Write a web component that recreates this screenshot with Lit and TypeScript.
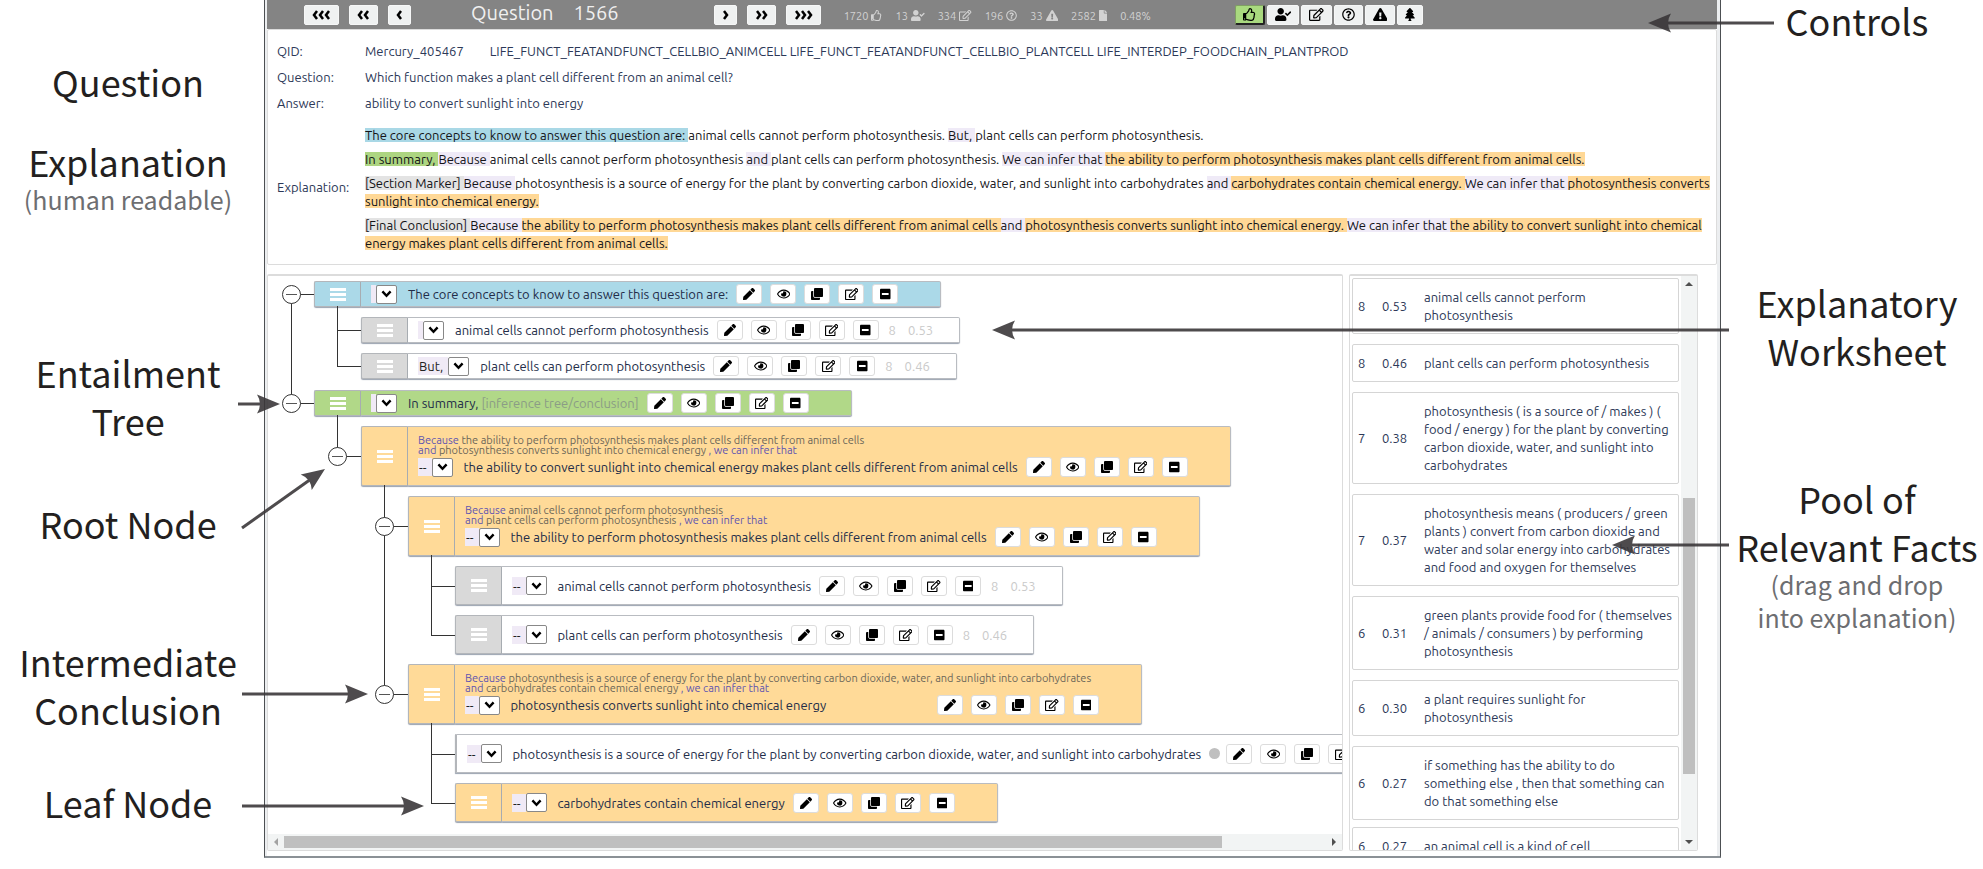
import { LitElement, html, css, svg, nothing, TemplateResult } from "lit";
import { customElement, property } from "lit/decorators.js";
import { classMap } from "lit/directives/class-map.js";

const ICONS: Record<string, [number, string]> = {
  pen: [512, "M290.74 93.24l128.02 128.02-277.99 277.99-114.14 12.6C11.35 513.54-1.56 500.62.14 485.34l12.7-114.22 277.9-277.88zm207.2-19.06l-60.11-60.11c-18.75-18.75-49.16-18.75-67.91 0l-56.55 56.55 128.02 128.02 56.55-56.55c18.75-18.76 18.75-49.16 0-67.91z"],
  eye: [576, "M288 144a110.94 110.94 0 0 0-31.24 5 55.4 55.4 0 0 1 7.24 27 56 56 0 0 1-56 56 55.4 55.4 0 0 1-27-7.24A111.71 111.71 0 1 0 288 144zm284.52 97.4C518.29 135.59 410.93 64 288 64S57.68 135.64 3.48 241.41a32.35 32.35 0 0 0 0 29.19C57.71 376.41 165.07 448 288 448s230.32-71.64 284.52-177.41a32.35 32.35 0 0 0 0-29.19zM288 400c-98.65 0-189.09-55-237.93-144C98.91 167 189.34 112 288 112s189.09 55 237.93 144C477.1 345 386.66 400 288 400z"],
  clone: [512, "M464 0c26.51 0 48 21.49 48 48v288c0 26.51-21.49 48-48 48H176c-26.51 0-48-21.49-48-48V48c0-26.51 21.49-48 48-48h288M176 416c-44.112 0-80-35.888-80-80V128H48c-26.51 0-48 21.49-48 48v288c0 26.51 21.49 48 48 48h288c26.51 0 48-21.49 48-48v-48H176z"],
  edit: [576, "M402.3 344.9l32-32c5-5 13.7-1.5 13.7 5.7V464c0 26.5-21.5 48-48 48H48c-26.5 0-48-21.5-48-48V112c0-26.5 21.5-48 48-48h273.5c7.1 0 10.7 8.6 5.7 13.7l-32 32c-1.5 1.5-3.5 2.3-5.7 2.3H48v352h352V350.5c0-2.1.8-4.1 2.3-5.6zm156.6-201.8L296.3 405.7l-90.4 10c-26.2 2.9-48.5-19.2-45.6-45.6l10-90.4L432.9 17.1c22.9-22.9 59.9-22.9 82.7 0l43.2 43.2c22.9 22.9 22.9 60 .1 82.8zM460.1 174L402 115.9 216.2 301.8l-7.3 65.3 65.3-7.3L460.1 174zm64.8-79.7l-43.2-43.2c-4.1-4.1-10.8-4.1-14.8 0L436 82l58.1 58.1 30.9-30.9c4-4.2 4-10.8-.1-14.9z"],
  minus: [448, "M400 32H48C21.5 32 0 53.5 0 80v352c0 26.5 21.5 48 48 48h352c26.5 0 48-21.5 48-48V80c0-26.5-21.5-48-48-48zM92 296c-6.6 0-12-5.4-12-12v-56c0-6.6 5.4-12 12-12h264c6.6 0 12 5.4 12 12v56c0 6.6-5.4 12-12 12H92z"],
  thumb: [512, "M466.27 286.69C475.04 271.84 480 256 480 236.85c0-44.015-37.218-85.58-85.82-85.58H357.7c4.92-12.81 8.85-28.13 8.85-46.54C366.55 31.936 328.86 0 271.28 0c-61.607 0-58.093 94.933-71.76 108.6-22.747 22.747-49.615 66.447-68.76 83.4H32c-17.673 0-32 14.327-32 32v240c0 17.673 14.327 32 32 32h64c14.893 0 27.408-10.174 30.978-23.95 44.509 1.001 75.06 39.94 177.802 39.94 7.22 0 15.22.01 22.22.01 77.117 0 111.986-39.423 112.94-95.33 13.319-18.425 20.299-43.122 17.34-66.99 9.854-18.452 13.664-40.343 8.99-62.99zm-61.75 53.83c12.56 21.13 1.26 49.41-13.94 57.57 7.7 48.78-17.608 65.9-53.12 65.9h-37.82c-71.639 0-118.029-37.82-171.64-37.82V240h10.92c28.36 0 67.98-70.89 94.54-97.46 28.36-28.36 18.91-75.63 37.82-94.54 47.27 0 47.27 32.98 47.27 56.73 0 39.17-28.36 56.72-28.36 94.54h103.99c21.11 0 37.73 18.91 37.82 37.82.09 18.9-12.82 37.81-22.27 37.81 13.489 14.555 16.371 45.236-5.21 65.62zM88 432c0 13.255-10.745 24-24 24s-24-10.745-24-24 10.745-24 24-24 24 10.745 24 24z"],
  user: [640, "M224 256c70.7 0 128-57.3 128-128S294.7 0 224 0 96 57.3 96 128s57.3 128 128 128zm89.6 32h-16.7c-22.2 10.2-46.9 16-72.9 16s-50.6-5.8-72.9-16h-16.7C60.2 288 0 348.2 0 422.4V464c0 26.5 21.5 48 48 48h352c26.5 0 48-21.5 48-48v-41.6c0-74.2-60.2-134.4-134.4-134.4zm323-128.4l-27.8-28.1c-4.6-4.7-12.1-4.7-16.8-.1l-104.8 104-45.5-45.8c-4.6-4.7-12.1-4.7-16.8-.1l-28.1 27.9c-4.7 4.6-4.7 12.1-.1 16.8l81.7 82.3c4.6 4.7 12.1 4.7 16.8.1l141.3-140.2c4.6-4.7 4.7-12.2.1-16.8z"],
  question: [512, "M256 8C119.043 8 8 119.083 8 256c0 136.997 111.043 248 248 248s248-111.003 248-248C504 119.083 392.957 8 256 8zm0 448c-110.532 0-200-89.431-200-200 0-110.495 89.472-200 200-200 110.491 0 200 89.471 200 200 0 110.53-89.431 200-200 200zm107.244-255.2c0 67.052-72.421 68.084-72.421 92.863V300c0 6.627-5.373 12-12 12h-45.647c-6.627 0-12-5.373-12-12v-8.659c0-35.745 27.1-50.034 47.579-61.516 17.561-9.845 28.324-16.541 28.324-29.579 0-17.246-21.999-28.693-39.784-28.693-23.189 0-33.894 10.977-48.942 29.969-4.057 5.12-11.46 6.071-16.666 2.124l-27.824-21.098c-5.107-3.872-6.251-11.066-2.644-16.363C184.846 131.491 214.94 112 261.794 112c49.071 0 101.45 38.304 101.45 88.8zM298 368c0 23.159-18.841 42-42 42s-42-18.841-42-42 18.841-42 42-42 42 18.841 42 42z"],
  warning: [576, "M569.517 440.013C587.975 472.007 564.806 512 527.94 512H48.054c-36.937 0-59.999-40.055-41.577-71.987L246.423 23.985c18.467-32.009 64.72-31.951 83.154 0l239.94 416.028zM288 354c-25.405 0-46 20.595-46 46s20.595 46 46 46 46-20.595 46-46-20.595-46-46-46zm-43.673-165.346l7.418 136c.347 6.364 5.609 11.346 11.982 11.346h48.546c6.373 0 11.635-4.982 11.982-11.346l7.418-136c.375-6.874-5.098-12.654-11.982-12.654h-63.383c-6.884 0-12.356 5.78-11.981 12.654z"],
  tree: [384, "M378.31 378.49L298.42 288h30.63c9.01 0 16.98-5 20.78-13.06 3.8-8.04 2.55-17.26-3.28-24.05L268.42 160h28.89c9.1 0 17.3-5.35 20.86-13.61 3.52-8.13 1.86-17.59-4.24-24.08L203.66 4.83c-6.03-6.45-17.28-6.45-23.32 0L70.06 122.31c-6.1 6.49-7.75 15.95-4.24 24.08C69.38 154.65 77.59 160 86.69 160h28.89l-78.14 90.91c-5.81 6.78-7.06 15.99-3.27 24.04C37.97 283 45.93 288 54.95 288h30.63L5.69 378.49c-6 6.79-7.36 16.09-3.56 24.26 3.75 8.05 12 13.25 21.01 13.25H160v24.45l-30.29 48.4c-5.32 10.64 2.42 23.16 14.31 23.16h95.96c11.89 0 19.63-12.52 14.31-23.16L224 440.45V416h136.86c9.01 0 17.26-5.2 21.01-13.25 3.8-8.17 2.44-17.47-3.56-24.26z"],
  file: [384, "M224 136V0H24C10.7 0 0 10.7 0 24v464c0 13.3 10.7 24 24 24h336c13.3 0 24-10.7 24-24V160H248c-13.2 0-24-10.8-24-24zm160-14.1v6.1H256V0h6.1c6.4 0 12.5 2.5 17 7l97.9 98c4.5 4.5 7 10.6 7 16.9z"],
};

const icon = (name: string) => {
  const [w, d] = ICONS[name];
  return html`<svg class="icon" viewBox="0 0 ${w} 512" aria-hidden="true"><path d=${d}></path></svg>`;
};

const chevrons = (count: number, dir: "left" | "right") => {
  const points = dir === "left" ? "5,1 2,5 5,9" : "2,1 5,5 2,9";
  return html`<svg class="chev" viewBox="0 0 ${count * 6 + 1} 10" aria-hidden="true">
    ${Array.from({ length: count }, (_, i) => svg`<polyline points=${points} transform="translate(${i * 6})"></polyline>`)}
  </svg>`;
};

interface TreeNode {
  kind: "intro" | "summary" | "conclusion" | "fact" | "plain";
  prefix: string;
  text: string;
  hint?: string;
  because?: [string, string];
  score?: [string, string];
  dot?: boolean;
  children?: TreeNode[];
}

const TREE: TreeNode[] = [
  {
    kind: "intro", prefix: "", text: "The core concepts to know to answer this question are:",
    children: [
      { kind: "fact", prefix: "", text: "animal cells cannot perform photosynthesis", score: ["8", "0.53"] },
      { kind: "fact", prefix: "But,", text: "plant cells can perform photosynthesis", score: ["8", "0.46"] },
    ],
  },
  {
    kind: "summary", prefix: "", text: "In summary,", hint: "[inference tree/conclusion]",
    children: [
      {
        kind: "conclusion", prefix: "--",
        text: "the ability to convert sunlight into chemical energy makes plant cells different from animal cells",
        because: ["the ability to perform photosynthesis makes plant cells different from animal cells", "photosynthesis converts sunlight into chemical energy"],
        children: [
          {
            kind: "conclusion", prefix: "--",
            text: "the ability to perform photosynthesis makes plant cells different from animal cells",
            because: ["animal cells cannot perform photosynthesis", "plant cells can perform photosynthesis"],
            children: [
              { kind: "fact", prefix: "--", text: "animal cells cannot perform photosynthesis", score: ["8", "0.53"] },
              { kind: "fact", prefix: "--", text: "plant cells can perform photosynthesis", score: ["8", "0.46"] },
            ],
          },
          {
            kind: "conclusion", prefix: "--", text: "photosynthesis converts sunlight into chemical energy",
            because: ["photosynthesis is a source of energy for the plant by converting carbon dioxide, water, and sunlight into carbohydrates", "carbohydrates contain chemical energy"],
            children: [
              { kind: "plain", prefix: "--", dot: true, text: "photosynthesis is a source of energy for the plant by converting carbon dioxide, water, and sunlight into carbohydrates" },
              { kind: "conclusion", prefix: "--", text: "carbohydrates contain chemical energy" },
            ],
          },
        ],
      },
    ],
  },
];

const FACTS: [string, string, string][] = [
  ["8", "0.53", "animal cells cannot perform photosynthesis"],
  ["8", "0.46", "plant cells can perform photosynthesis"],
  ["7", "0.38", "photosynthesis ( is a source of / makes ) ( food / energy ) for the plant by converting carbon dioxide, water, and sunlight into carbohydrates"],
  ["7", "0.37", "photosynthesis means ( producers / green plants ) convert from carbon dioxide and water and solar energy into carbohydrates and food and oxygen for themselves"],
  ["6", "0.31", "green plants provide food for ( themselves / animals / consumers ) by performing photosynthesis"],
  ["6", "0.30", "a plant requires sunlight for photosynthesis"],
  ["6", "0.27", "if something has the ability to do something else , then that something can do that something else"],
  ["6", "0.27", "an animal cell is a kind of cell"],
];

const ACTIONS: [string, string][] = [
  ["pen", "Edit text"], ["eye", "View"], ["clone", "Duplicate"], ["edit", "Annotate"], ["minus", "Remove"],
];

const shared = css`
  * { box-sizing: border-box; }
  button { font: inherit; color: inherit; padding: 0; margin: 0; cursor: pointer; }
  ul, ol { list-style: none; margin: 0; padding: 0; }
  .icon { display: block; height: 12px; width: auto; fill: currentColor; }
`;

@customElement("nav-bar")
class NavBar extends LitElement {
  static styles = [shared, css`
    :host { display: flex; align-items: center; height: 29px; padding-left: 37px; background: #848484; white-space: nowrap; }
    .group { display: flex; gap: 10px; }
    .btn { display: flex; align-items: center; justify-content: center; height: 20px; border: 1px solid #f6f7f7; border-radius: 2px; background: #eff1f1; color: #000; }
    .nav { padding: 0 7px; }
    .chev { display: block; height: 10px; width: auto; fill: none; stroke: #000; stroke-width: 2.5; }
    .title { display: flex; gap: 20px; margin: 0 95px 4px 60px; font-size: 20px; line-height: 24px; font-weight: 400; color: #f0f0f0; }
    .stats { display: flex; gap: 13px; margin-left: 23px; padding-top: 2px; font-size: 11px; line-height: 12px; color: #d2d2d2; }
    .stat { display: flex; align-items: center; gap: 3px; }
    .stats .icon { height: 11px; }
    .tools { display: flex; gap: 2px; margin-left: 84px; }
    .tool { padding: 0 7px; }
    .tool .icon { height: 13px; }
    .on { background: #a9d97f; border: 1px solid #7f9f63; border-right: 2px solid #222; border-bottom: 2px solid #222; }
  `];
  render() {
    const stats: [string, string][] = [["1720", "thumb"], ["13", "user"], ["334", "edit"], ["196", "question"], ["33", "warning"], ["2582", "file"], ["0.48%", ""]];
    const tools: [string, string][] = [["thumb", "Approve"], ["user", "Reviewed"], ["edit", "Needs edit"], ["question", "Unsure"], ["warning", "Problem"], ["tree", "Show tree"]];
    return html`
      <div class="group">
        ${[3, 2, 1].map(n => html`<button class="btn nav" aria-label="Back ${n}">${chevrons(n, "left")}</button>`)}
      </div>
      <h1 class="title"><span>Question</span><span>1566</span></h1>
      <div class="group">
        ${[1, 2, 3].map(n => html`<button class="btn nav" aria-label="Forward ${n}">${chevrons(n, "right")}</button>`)}
      </div>
      <div class="stats">
        ${stats.map(([n, i]) => html`<span class="stat">${n}${i ? icon(i) : nothing}</span>`)}
      </div>
      <div class="tools">
        ${tools.map(([i, label], k) => html`<button class=${classMap({ btn: true, tool: true, on: k === 0 })} aria-label=${label}>${icon(i)}</button>`)}
      </div>`;
  }
}

@customElement("question-panel")
class QuestionPanel extends LitElement {
  static styles = [shared, css`
    :host { display: block; border: 1px solid #dcdcdc; border-radius: 2px; padding: 8px 4px 6px 9px; background: #fff; }
    .list { display: grid; grid-template-columns: 88px minmax(0, 1fr); align-items: center; margin: 0; line-height: 26px; color: #2c3857; }
    dd { margin: 0; }
    .code { margin-left: 26px; }
    .story { padding-top: 10px; line-height: 18px; color: #131317; }
    .story p { margin: 0 0 6px; }
    mark { color: inherit; }
    .c { background: #a9d8e6; }
    .s { background: #add581; }
    .g { background: #e3e3e3; }
    .l { background: #efeaf7; }
    .o { background: #ffd896; }
  `];
  render() {
    const m = (k: string, t: string) => html`<mark class=${k}>${t} </mark>`;
    return html`<dl class="list">
      <dt>QID:</dt><dd>Mercury_405467<span class="code">LIFE_FUNCT_FEATANDFUNCT_CELLBIO_ANIMCELL LIFE_FUNCT_FEATANDFUNCT_CELLBIO_PLANTCELL LIFE_INTERDEP_FOODCHAIN_PLANTPROD</span></dd>
      <dt>Question:</dt><dd>Which function makes a plant cell different from an animal cell?</dd>
      <dt>Answer:</dt><dd>ability to convert sunlight into energy</dd>
      <dt>Explanation:</dt>
      <dd class="story">
        <p>${m("c", "The core concepts to know to answer this question are:")}animal cells cannot perform photosynthesis. ${m("l", "But,")}plant cells can perform photosynthesis.</p>
        <p>${m("s", "In summary,")}${m("l", "Because")}animal cells cannot perform photosynthesis ${m("l", "and")}plant cells can perform photosynthesis. ${m("l", "We can infer that")}${m("o", "the ability to perform photosynthesis makes plant cells different from animal cells.")}</p>
        <p>${m("g", "[Section Marker]")}${m("l", "Because")}photosynthesis is a source of energy for the plant by converting carbon dioxide, water, and sunlight into carbohydrates ${m("l", "and")}${m("o", "carbohydrates contain chemical energy.")}${m("l", "We can infer that")}${m("o", "photosynthesis converts sunlight into chemical energy.")}</p>
        <p>${m("g", "[Final Conclusion]")}${m("l", "Because")}${m("o", "the ability to perform photosynthesis makes plant cells different from animal cells")}${m("l", "and")}${m("o", "photosynthesis converts sunlight into chemical energy.")}${m("l", "We can infer that")}${m("o", "the ability to convert sunlight into chemical energy makes plant cells different from animal cells.")}</p>
      </dd>
    </dl>`;
  }
}

@customElement("work-sheet")
class WorkSheet extends LitElement {
  static styles = [shared, css`
    :host { display: flex; flex-direction: column; min-height: 0; border: 1px solid #dcdcdc; border-top-width: 2px; border-radius: 2px; background: #fff; }
    .view { flex: 1; min-height: 0; overflow: hidden; padding-top: 5px; }
    .tree { --stem: 46px; --row: 26px; }
    .kids { --stem: 47px; margin-left: var(--indent); }
    .d0 { --indent: 46px; }
    .d1, .d2, .d3 { --indent: 47px; }
    .d3 { --row: 39px; }
    .node { position: relative; padding-top: 11px; }
    .d1, .d2, .d3 { padding-top: 10px; }
    .d0:first-child { padding-top: 0; }
    .node:not(:last-child)::after { content: ""; position: absolute; top: 20px; bottom: 0; left: 23px; border-left: 1px solid #333; }
    .row { display: flex; height: var(--row); width: max-content; }
    .tall { --row: 60px; }
    .node > .kids { --row: inherit; }
    .stem { position: relative; display: flex; align-items: center; justify-content: center; width: var(--stem); }
    .stem::before { content: ""; position: absolute; top: -11px; bottom: 50%; left: 23px; border-left: 1px solid #333; }
    .stem::after { content: ""; position: absolute; left: 23px; right: 0; top: 50%; border-top: 1px solid #333; }
    .d0:first-child > .row .stem::before { display: none; }
    .toggle { position: relative; z-index: 1; display: flex; align-items: center; justify-content: center; width: 19px; height: 19px; border: 1px solid #333; border-radius: 50%; background: #fff; }
    .toggle::before { content: ""; width: 11px; height: 1px; background: #555; }
    .handle { display: flex; flex-direction: column; align-items: center; justify-content: center; gap: 2px; width: 47px; border: 1px solid #b3b6ba; border-right-color: #a9adb2; border-radius: 2px 0 0 2px; background: var(--fill); box-shadow: 0 1px 1px #9aa2b0; }
    .bar { width: 16px; height: 3px; background: #fff; }
    .box { display: flex; flex-direction: column; justify-content: center; border: 1px solid #b9bcc1; border-left: 0; border-radius: 0 2px 2px 0; background: var(--body); padding-left: 10px; box-shadow: 0 1px 1px #9aa2b0; color: #222c48; white-space: nowrap; }
    .intro { --fill: #abd9e8; --body: #abd9e8; }
    .summary { --fill: #b1d888; --body: #b1d888; }
    .conclusion { --fill: #ffda98; --body: #ffda98; }
    .fact { --fill: #d9d9d9; --body: #fff; }
    .plain { --body: #fff; }
    .plain .box { border-left: 2px solid #b3b6ba; }
    .because { padding-right: 50px; margin-bottom: 2px; font-size: 11px; line-height: 10px; color: #6d6759; }
    .because b { font-weight: 400; color: #5f56b0; }
    .main { display: flex; align-items: center; height: 20px; padding-right: 42px; }
    .scored { padding-right: 26px; }
    .prefix { height: 18px; padding: 0 5px 0 1px; background: #f0eaf6; color: #222; line-height: 18px; }
    .prefix:empty { padding: 0 4px 0 1px; }
    .pick { appearance: none; width: 21px; height: 19px; margin: 0; padding: 0; border: 1px solid #888; border-radius: 2px; background: #fff url("data:image/svg+xml,%3Csvg xmlns='http://www.w3.org/2000/svg' viewBox='0 0 11 8'%3E%3Cpath d='M1.4 1.4L5.5 5.8 9.6 1.4' fill='none' stroke='%23000' stroke-width='2.4'/%3E%3C/svg%3E") center / 11px 8px no-repeat; color: transparent; }
    .text { margin: 0 8px 0 11px; line-height: 18px; }
    .hint { color: #8b9c86; }
    .dot { width: 11px; height: 11px; margin-right: 6px; border-radius: 50%; background: #bfbfbf; }
    .acts { display: flex; gap: 8px; margin-left: auto; }
    .act { display: flex; align-items: center; justify-content: center; width: 26px; height: 20px; border: 1px solid #dcdcdc; border-radius: 3px; background: #fff; color: #000; }
    .score { display: flex; gap: 12px; margin-left: 10px; color: #cacaca; }
    .bar-x { display: flex; align-items: center; height: 16px; background: #f2f4f4; }
    .arrow { width: 16px; height: 16px; border: 0; background: none; display: flex; align-items: center; justify-content: center; }
    .arrow svg { width: 4px; height: 8px; fill: #505050; }
    .arrow.off svg { fill: #a3a3a3; }
    .track { flex: 1; }
    .thumb { width: 90%; height: 12px; background: #bfbfbf; }
  `];
  node(n: TreeNode, depth: number): TemplateResult {
    return html`<li class="node d${depth} ${n.kind}">
      <div class=${classMap({ row: true, tall: !!n.because })}>
        <div class="stem">${n.children ? html`<button class="toggle" aria-label="Collapse"></button>` : nothing}</div>
        ${n.kind === "plain" ? nothing : html`<button class="handle" aria-label="Drag"><span class="bar"></span><span class="bar"></span><span class="bar"></span></button>`}
        <div class="box">
          ${n.because ? html`<div class="because"><div><b>Because</b> ${n.because[0]}</div><div><b>and</b> ${n.because[1]} <b>, we can infer that</b></div></div>` : nothing}
          <div class=${classMap({ main: true, scored: !!n.score })}>
            <span class="prefix">${n.prefix}</span>
            <select class="pick" aria-label="Connective"><option></option><option>But,</option><option>and</option></select>
            <span class="text">${n.text}${n.hint ? html` <span class="hint">${n.hint}</span>` : nothing}</span>
            ${n.dot ? html`<span class="dot"></span>` : nothing}
            <span class="acts">${ACTIONS.map(([i, l]) => html`<button class="act" aria-label=${l}>${icon(i)}</button>`)}</span>
            ${n.score ? html`<span class="score"><span>${n.score[0]}</span><span>${n.score[1]}</span></span>` : nothing}
          </div>
        </div>
      </div>
      ${n.children ? html`<ul class="kids">${n.children.map(c => this.node(c, depth + 1))}</ul>` : nothing}
    </li>`;
  }
  render() {
    return html`
      <div class="view"><ul class="tree">${TREE.map(n => this.node(n, 0))}</ul></div>
      <div class="bar-x">
        <button class="arrow off" aria-label="Scroll left"><svg viewBox="0 0 4 8"><path d="M4 0v8L0 4z"></path></svg></button>
        <div class="track"><div class="thumb"></div></div>
        <button class="arrow" aria-label="Scroll right"><svg viewBox="0 0 4 8"><path d="M0 0v8l4-4z"></path></svg></button>
      </div>`;
  }
}

@customElement("fact-pool")
class FactPool extends LitElement {
  static styles = [shared, css`
    :host { display: flex; min-height: 0; border: 1px solid #dcdcdc; border-top-width: 2px; border-radius: 2px; background: #fff; color: #2c3857; }
    .cards { flex: 1; display: flex; flex-direction: column; gap: 10px; overflow: hidden; padding: 2px 2px 0; line-height: 18px; }
    .card { flex: none; display: grid; grid-template-columns: 14px 32px minmax(0, 1fr); column-gap: 10px; align-items: center; padding: 9px 4px 9px 5px; border: 1px solid #d5d5d5; border-radius: 2px; }
    .card:last-child { margin-top: -3px; }
    .bar-y { display: flex; flex-direction: column; align-items: center; width: 16px; background: #f2f4f4; }
    .arrow { width: 16px; height: 16px; border: 0; background: none; display: flex; align-items: center; justify-content: center; }
    .arrow svg { width: 8px; height: 4px; fill: #505050; }
    .track { flex: 1; display: flex; flex-direction: column; }
    .thumb { width: 12px; height: 51%; background: #bfbfbf; }
    .before { height: 38%; }
  `];
  render() {
    return html`
      <ul class="cards">${FACTS.map(([n, s, t]) => html`<li class="card"><span>${n}</span><span>${s}</span><span>${t}</span></li>`)}</ul>
      <div class="bar-y">
        <button class="arrow" aria-label="Scroll up"><svg viewBox="0 0 8 4"><path d="M0 4h8L4 0z"></path></svg></button>
        <div class="track"><div class="before"></div><div class="thumb"></div></div>
        <button class="arrow" aria-label="Scroll down"><svg viewBox="0 0 8 4"><path d="M0 0h8L4 4z"></path></svg></button>
      </div>`;
  }
}

/* A straight pointer with a notched head, drawn from (x1,y1) to its tip (x2,y2). */
const pointer = (x1: number, y1: number, x2: number, y2: number) => {
  const deg = Math.atan2(y2 - y1, x2 - x1) * 180 / Math.PI;
  const len = Math.hypot(x2 - x1, y2 - y1);
  return svg`<g transform="translate(${x1} ${y1}) rotate(${deg})"><path d="M0 -1.5H${len - 18}V1.5H0z"></path><path d="M${len} 0L${len - 23} 9.5Q${len - 17} 0 ${len - 23} -9.5z"></path></g>`;
};

@customElement("side-notes")
class SideNotes extends LitElement {
  @property() side: "left" | "right" = "left";
  static styles = [shared, css`
    :host { display: block; position: relative; text-align: center; font-family: "Noto Sans CJK JP", "Noto Sans", sans-serif; font-size: 36px; line-height: 48px; color: #231f20; white-space: nowrap; }
    .left { padding: 57px 8px 0 0; }
    .right { padding: 0 0 0 10px; margin-top: -4px; }
    .sub { margin-top: -2px; font-size: 25px; line-height: 33px; color: #6d6e71; }
    .n1 { margin-top: 32px; }
    .n2 { margin-top: 132px; }
    .n3 { margin-top: 55px; }
    .n4 { margin-top: 90px; }
    .n5 { margin-top: 45px; }
    .r1 { margin-top: 234px; }
    .r2 { margin-top: 100px; }
    .arrows { position: absolute; z-index: 5; top: 0; left: 0; width: 1px; height: 1px; overflow: visible; pointer-events: none; fill: #3a3739; opacity: 0.9; }
  `];
  render() {
    if (this.side === "left") return html`
      <div class="left">
        <div>Question</div>
        <div class="n1">Explanation<div class="sub">(human readable)</div></div>
        <div class="n2">Entailment<br>Tree</div>
        <div class="n3">Root Node</div>
        <div class="n4">Intermediate<br>Conclusion</div>
        <div class="n5">Leaf Node</div>
      </div>
      <svg class="arrows" aria-hidden="true">
        ${pointer(238, 404, 280, 404)}${pointer(242, 528, 325, 469)}${pointer(242, 694, 368, 694)}${pointer(242, 806, 424, 806)}
      </svg>`;
    return html`
      <div class="right">
        <div>Controls</div>
        <div class="r1">Explanatory<br>Worksheet</div>
        <div class="r2">Pool of<br>Relevant Facts<div class="sub">(drag and drop<br>into explanation)</div></div>
      </div>
      <svg class="arrows" aria-hidden="true">
        ${pointer(53, 23, -73, 23)}${pointer(8, 330, -729, 330)}${pointer(8, 545, -109, 545)}
      </svg>`;
  }
}

@customElement("app-root")
class AppRoot extends LitElement {
  static styles = [shared, css`
    :host { display: grid; grid-template-columns: 264px minmax(0, 1fr) 262px; height: 100vh; overflow: hidden; box-sizing: border-box; background: #fff; font-family: Ubuntu, "Noto Sans", sans-serif; font-size: 13px; }
    .frame { display: flex; flex-direction: column; min-height: 0; margin-bottom: 11px; padding: 0 3px 0 2px; border: solid #4c4f52; border-width: 0 1px 2px; border-bottom-color: #8b9196; background: #eceef0; }
    .body { flex: 1; min-height: 0; display: flex; flex-direction: column; gap: 9px; padding-bottom: 5px; background: #fff; }
    .split { flex: 1; min-height: 0; display: grid; grid-template-columns: minmax(0, 1fr) 349px; grid-template-rows: minmax(0, 1fr); gap: 6px; padding-right: 19px; }
  `];
  render() {
    return html`
      <side-notes side="left"></side-notes>
      <main class="frame">
        <nav-bar></nav-bar>
        <div class="body">
          <question-panel></question-panel>
          <div class="split"><work-sheet></work-sheet><fact-pool></fact-pool></div>
        </div>
      </main>
      <side-notes side="right"></side-notes>`;
  }
}
